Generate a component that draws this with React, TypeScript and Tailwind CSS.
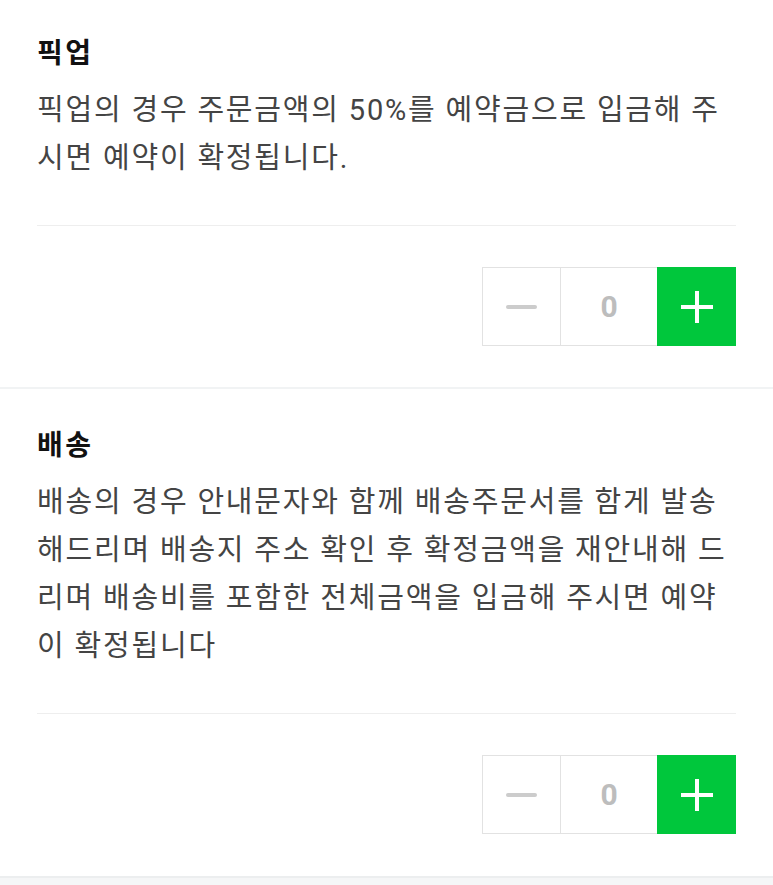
import { useState } from 'react'

const SECTIONS = [
  {
    title: '픽업',
    lines: ['픽업의 경우 주문금액의 50%를 예약금으로 입금해 주', '시면 예약이 확정됩니다.'],
  },
  {
    title: '배송',
    lines: [
      '배송의 경우 안내문자와 함께 배송주문서를 함게 발송',
      '해드리며 배송지 주소 확인 후 확정금액을 재안내해 드',
      '리며 배송비를 포함한 전체금액을 입금해 주시면 예약',
      '이 확정됩니다',
    ],
  },
]

function Stepper() {
  const [count, setCount] = useState(0)

  return (
    <div className="flex h-[79px]">
      <button
        onClick={() => setCount((c) => Math.max(0, c - 1))}
        className="flex w-[79px] items-center justify-center border-[1.5px] border-[#e2e2e2] bg-white"
      >
        <span className="block h-[4px] w-[31px] rounded-sm bg-[#cccccc]" />
      </button>
      <div className="flex w-[96px] items-center justify-center border-y-[1.5px] border-[#e2e2e2] bg-white text-[30px] font-bold text-[#bdbdbd]">
        {count}
      </div>
      <button
        onClick={() => setCount((c) => c + 1)}
        className="relative flex w-[79px] items-center justify-center bg-[#00c73c]"
      >
        <span className="absolute h-[4px] w-[32px] bg-white" />
        <span className="absolute h-[32px] w-[4px] bg-white" />
      </button>
    </div>
  )
}

export default function App() {
  return (
    <div
      className="min-h-[885px] bg-white"
      style={{ fontFamily: 'Roboto, "Noto Sans CJK KR", sans-serif' }}
    >
      {SECTIONS.map((s, i) => (
        <div key={s.title}>
          <section className={i === 0 ? 'px-[37px] pt-[34px] pb-[41px]' : 'px-[37px] pt-[37px] pb-[42px]'}>
            <h2 className="text-[28px] font-bold leading-[40px] tracking-[2.5px] text-[#111111]">
              {s.title}
            </h2>
            <p className="mt-[12px] text-[29px] leading-[48px] tracking-[1.8px] text-[#444444]">
              {s.lines.map((l) => (
                <span key={l} className="block whitespace-nowrap">
                  {l}
                </span>
              ))}
            </p>
            <div className="mt-[43px] h-px bg-[#eeeeee]" />
            <div className="mt-[41px] flex justify-end">
              <Stepper />
            </div>
          </section>
          {i === 0 ? (
            <div className="h-[2px] bg-[#f1f3f4]" />
          ) : (
            <div className="h-[12px] border-t-2 border-[#eceeef] bg-[#f5f6f7]" />
          )}
        </div>
      ))}
    </div>
  )
}
